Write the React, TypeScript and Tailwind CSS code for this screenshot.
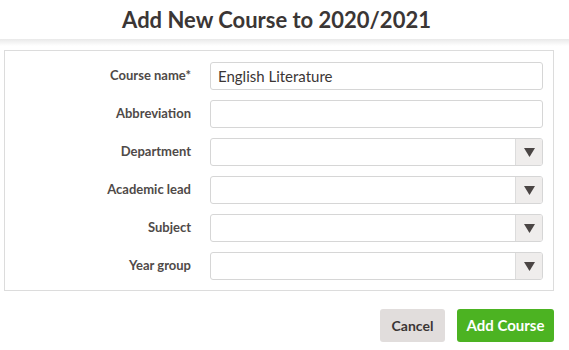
import type { ReactNode } from 'react';

const fields = [
  { label: 'Course name*', value: 'English Literature', select: false },
  { label: 'Abbreviation', value: '', select: false },
  { label: 'Department', value: '', select: true },
  { label: 'Academic lead', value: '', select: true },
  { label: 'Subject', value: '', select: true },
  { label: 'Year group', value: '', select: true },
];

const Row = ({ label, children }: { label: string; children: ReactNode }) => (
  <div className="flex items-center">
    <label className="w-[205px] pr-[19px] text-right text-[13px] font-bold text-[#4f4a48]">{label}</label>
    <div className="flex-1">{children}</div>
  </div>
);

export default function App() {
  return (
    <div className="h-[350px] w-[569px] bg-white font-['Lato',sans-serif] text-[#3b3635]">
      <div className="relative flex h-[40px] items-center justify-center border-b border-[#dedede] pr-[16px]">
        <h1 className="text-[22px] font-bold text-[#3b3635]">Add New Course to 2020/2021</h1>
        <div className="pointer-events-none absolute inset-x-0 top-full h-[7px] bg-gradient-to-b from-[#e9e9e9] to-white" />
      </div>
      <div className="px-[4px] pt-[10px]">
        <div className="mr-[11px] flex flex-col gap-[10px] border border-[#dcdcdc] pb-[10px] pl-0 pr-[10px] pt-[11px]">
          {fields.map((f) => (
            <Row key={f.label} label={f.label}>
              <div className="flex h-[28px] items-stretch overflow-hidden rounded-[3px] border border-[#d6d6d6] bg-white">
                <div className="flex flex-1 items-center px-[7px] text-[15px] text-[#3b3635]">{f.value}</div>
                {f.select && (
                  <div className="flex w-[27px] items-center justify-center border-l border-[#dcdcdc] bg-[#efedec]">
                    <svg width="11" height="9" viewBox="0 0 11 9">
                      <path d="M0 0 H11 L5.5 9 Z" fill="#4a4544" />
                    </svg>
                  </div>
                )}
              </div>
            </Row>
          ))}
        </div>
      </div>
      <div className="flex justify-end gap-[12px] pr-[15px] pt-[18px]">
        <button className="h-[33px] w-[65px] rounded-[3px] bg-[#e1dddc] text-[14px] font-bold text-[#3b3635]">Cancel</button>
        <button className="h-[33px] w-[97px] rounded-[3px] bg-[#4cb322] text-[15px] font-bold text-white">Add Course</button>
      </div>
    </div>
  );
}
